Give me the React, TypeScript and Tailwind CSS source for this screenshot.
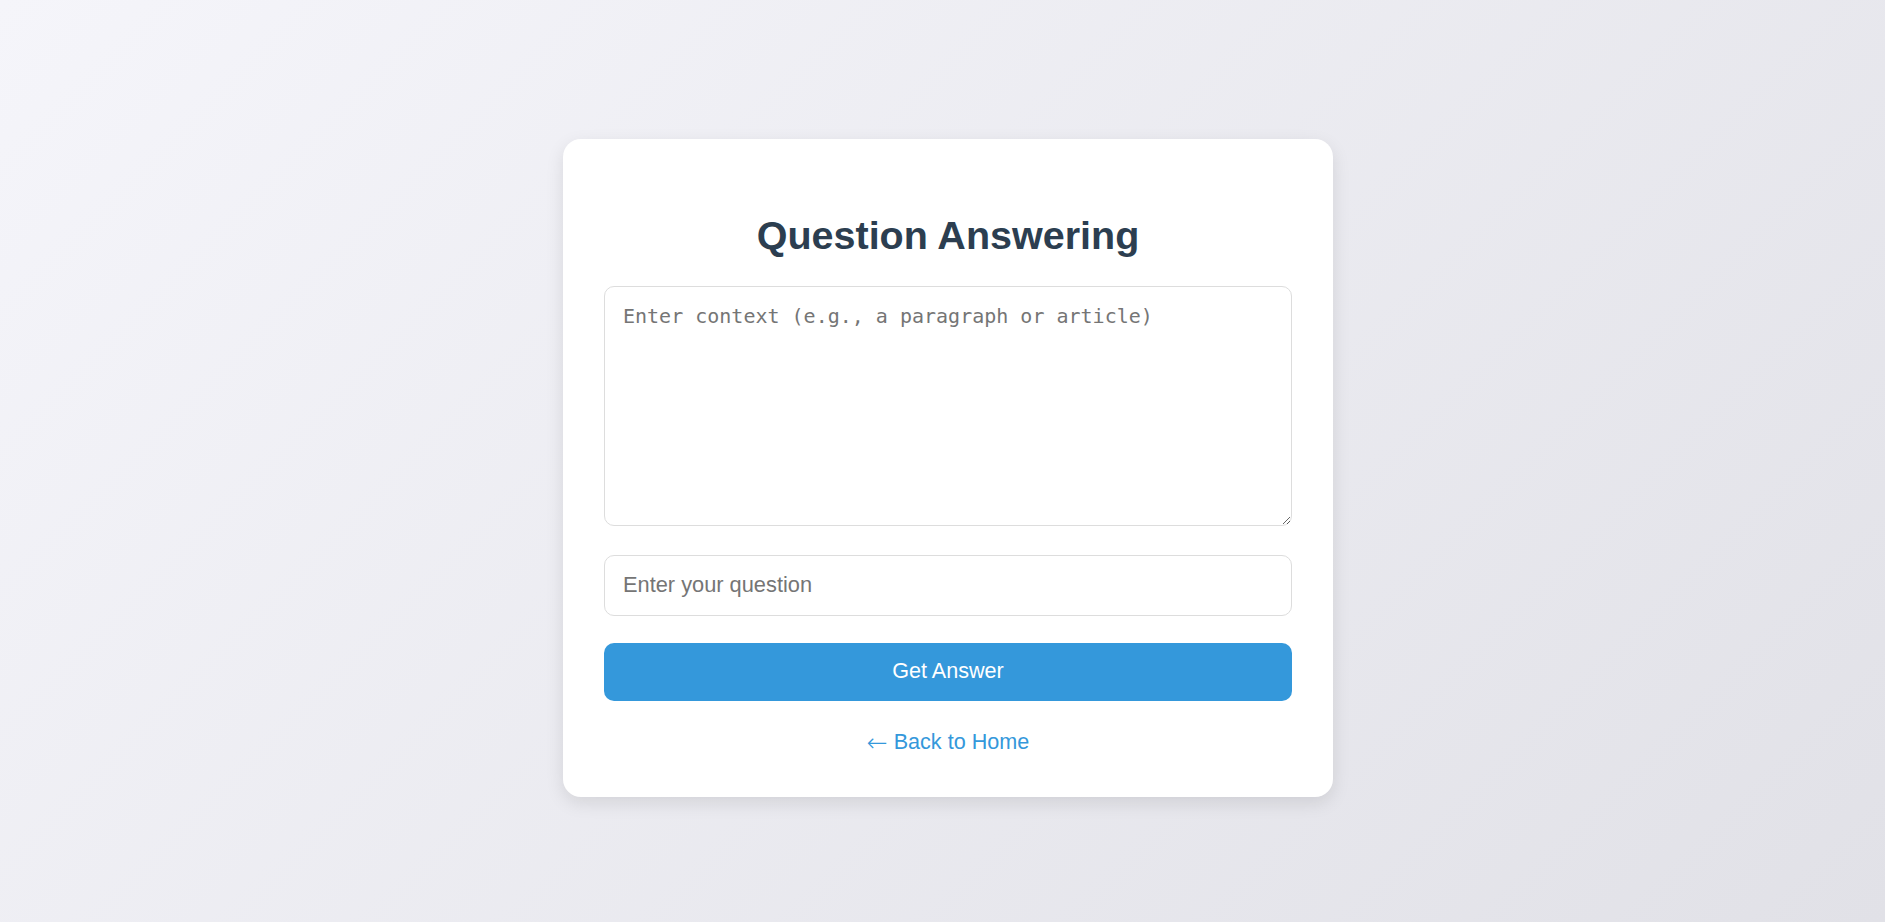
import React from "react";

export default function App() {
  return (
    <div
      className="min-h-screen w-full flex items-center justify-center bg-[linear-gradient(135deg,#f5f5fa_0%,#e1e1e7_100%)] pl-[11px] pt-[13px]"
      style={{ fontFamily: '"Liberation Sans", Arial, sans-serif' }}
    >
      <div className="w-[770px] bg-white rounded-[18px] shadow-[0_6px_18px_rgba(0,0,0,0.1)] pl-[41px] pr-[41px] pt-[74px] pb-[43px] flex flex-col">
        <h1 className="text-center text-[39.5px] leading-[45px] font-bold text-[#2c3e50] mb-[28px]">
          Question Answering
        </h1>
        <textarea
          className="block w-full h-[240px] border border-[#dddddd] rounded-[10px] px-[18px] py-[18px] text-[20px] leading-[23px] text-[#333] placeholder:text-[#757575] outline-none"
          style={{ fontFamily: '"DejaVu Sans Mono", "Liberation Mono", monospace' }}
          placeholder="Enter context (e.g., a paragraph or article)"
        />
        <input
          type="text"
          className="block w-full h-[61px] mt-[29px] border border-[#dddddd] rounded-[10px] px-[18px] text-[21.8px] text-[#333] placeholder:text-[#757575] outline-none"
          placeholder="Enter your question"
        />
        <button className="block w-full h-[58px] mt-[27px] bg-[#3498db] text-white rounded-[10px] text-[21.6px]">
          Get Answer
        </button>
        <a
          href="#"
          className="block text-center mt-[28px] text-[21.6px] leading-[25px] text-[#3498db]"
        >
          <span
            style={{ fontFamily: '"DejaVu Sans", sans-serif' }}
            className="inline-block translate-y-[2px] text-[25px] leading-[0] font-light"
          >
            ←
          </span>{" "}
          Back to Home
        </a>
      </div>
    </div>
  );
}
